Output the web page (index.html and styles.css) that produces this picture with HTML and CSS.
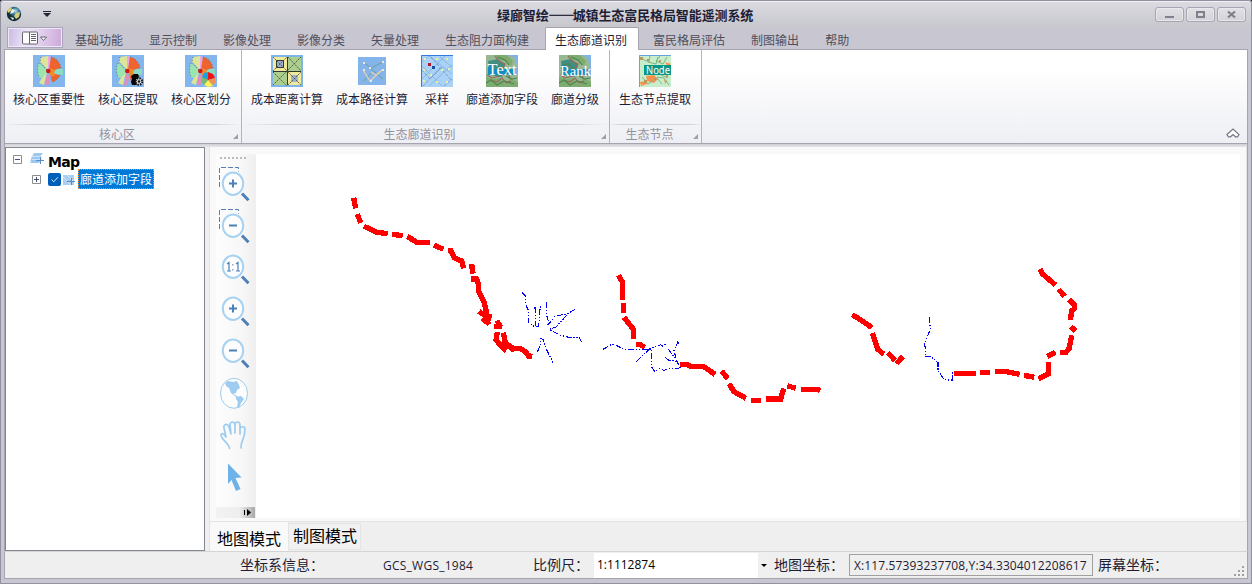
FILE: index.html
```html
<!DOCTYPE html>
<html lang="zh-CN">
<head>
<meta charset="utf-8">
<title>绿廊智绘——城镇生态富民格局智能遥测系统</title>
<link rel="stylesheet" href="styles.css">
</head>
<body>
<svg class="defs" width="0" height="0" aria-hidden="true">
  <defs>
    <radialGradient id="earth" cx=".6" cy=".3"><stop offset="0" stop-color="#b7dceb"/><stop offset=".5" stop-color="#367797"/><stop offset="1" stop-color="#122b35"/></radialGradient>
    <symbol id="core" viewBox="0 0 32 32">
      <path fill="#83b6ed" d="M0 0h32v32H0z"/>
      <path fill="#99e5ae" d="M6 8c-2 4-2 9 0 14l3 1 6-7z"/>
      <path fill="#dde598" d="M8 2l7-1v14l-8-8zM14 17l-5 6-3 5 5 2z"/>
      <path fill="#eda6e4" d="M15 1h2.500l-1 14H15z"/>
      <path fill="#ef642e" d="M18 2c5 1 9 5 10 11l-7 2-5-1zM17 18l10 2c-1 3-4 6-8 7z"/>
      <path fill="#f18c2b" d="M16 13l6 2v5l-3 2-3-4z"/>
      <path fill="#8bdcc0" d="M21 17l3-3h6v6l-8-1z"/>
      <path fill="#e58bbb" d="M14 19l3 2-1 8-4 2z"/>
      <path fill="none" stroke="#4f6b66" stroke-width=".8" stroke-dasharray="1 2" d="M8 2l-1 5 7 8M6 8c-2 4-2 9 0 14M18 2c5 1 9 5 10 11M27 20c-1 3-4 6-8 7"/>
      <circle cx="15.300" cy="16" r="2.300" fill="#d21818"/>
    </symbol>
    <symbol id="terrain" viewBox="0 0 32 32">
      <path fill="#80b3ea" d="M0 0h32v32H0z"/>
      <path fill="#98b894" d="M0 0h20l8 2 3 8-2 7 3 6v9H0z"/>
      <path fill="#418f82" d="M2 6l10-2 7 6-3 12-12-2z"/>
      <path fill="#7dac70" d="M0 22l7 2 7-1 6 7 4-7 8 4v5H0zM8 0h13l6 6-2 5-7-5-5-1z"/>
      <path fill="none" stroke="#9a6559" stroke-width="1.100" d="M9 1l4 5 6 3-3 5 6 4 2 5M4 25l7 2 5-4 4 5 5-2M1 20l5 3 8-2"/>
      <path fill="none" stroke="#528350" stroke-width="1.200" d="M12 2l7 3 4 5M3 10l7-1 4 5-5 4M0 28l5-3 6 5 7-4 10 3M20 21l6 3 5-1"/>
      <path fill="#168dbe" d="M2 10h5v10H2zM8 14h21v6H8z"/>
    </symbol>
    <symbol id="lens" viewBox="0 0 40 42">
      <ellipse cx="17" cy="20.700" rx="10.200" ry="11.200" fill="#fdfdfd" stroke="#a7d2f2" stroke-width="2"/>
      <path stroke="#4c80b7" stroke-width="3" d="M26 30.500l6.500 6.800"/>
    </symbol>
    <symbol id="marquee" viewBox="0 0 40 42"><path fill="none" stroke="#537fb4" stroke-dasharray="5 2" d="M3.500 24V4.500h19v4"/></symbol>
  </defs>
</svg>
<div class="window">
  <header class="titlebar">
    <svg class="globe" width="16" height="16" viewBox="0 0 16 16"><circle cx="8" cy="8" r="7.200" fill="url(#earth)"/><path fill="#d6ce78" d="M2 3l4-2-1 4-3 2zM10 7l4-1-1 5-3 2-2-3z"/><path fill="#eef3ec" d="M6 3l3 1-2 3-3 1zM4 11l4 1-1 2z"/></svg>
    <svg class="quick" width="8" height="6" viewBox="0 0 8 6"><path fill="#252434" d="M0 0h8v1H0zM0 2h8L4 6z"/></svg>
    <h1 class="title">绿廊智绘<span class="dash">——</span>城镇生态富民格局智能遥测系统</h1>
    <div class="controls">
      <span class="control"><svg width="27" height="13"><path fill="#807f8d" d="M9 8h9v2H9z"/></svg></span>
      <span class="control"><svg width="27" height="13"><path fill="none" stroke="#807f8d" stroke-width="2" d="M10 4h7v5h-7z"/></svg></span>
      <span class="control"><svg width="27" height="13"><path fill="none" stroke="#807f8d" stroke-width="2.300" d="M10 3.500l7 6M17 3.500l-7 6"/></svg></span>
    </div>
  </header>
  <nav class="tabs">
    <div class="app-button"><svg width="26" height="14" viewBox="0 0 26 14"><rect x=".5" y="1" width="15" height="12" rx="1" fill="#fff" stroke="#64636f"/><path stroke="#64636f" d="M7.500 1v12M9 3.500h5M9 5.500h5M9 7.500h5M9 9.500h5"/><path fill="#fff" stroke="#64636f" d="M18.500 6h6l-3 3.500z"/></svg></div>
    <span class="tab">基础功能</span><span class="tab">显示控制</span><span class="tab">影像处理</span><span class="tab">影像分类</span><span class="tab">矢量处理</span><span class="tab">生态阻力面构建</span><span class="tab tab-active">生态廊道识别</span><span class="tab">富民格局评估</span><span class="tab">制图输出</span><span class="tab">帮助</span>
  </nav>
  <section class="ribbon">
    <div class="group group-core">
      <div class="commands">
        <div class="command"><svg width="32" height="32"><use href="#core" width="32" height="32"/></svg><span>核心区重要性</span></div>
        <div class="command"><svg width="32" height="32" viewBox="0 0 32 32"><use href="#core" width="32" height="32"/><path fill="#050505" d="M19 21l3-2h4l1 3-2 3 1 4-2 1h-4l-1-3 1-3z"/><circle cx="27" cy="26.500" r="3.200" fill="#e7edf2" stroke="#111" stroke-width="2" stroke-dasharray="1.500 1"/><circle cx="27" cy="26.500" r="1.300" fill="#111"/></svg><span>核心区提取</span></div>
        <div class="command"><svg width="32" height="32" viewBox="0 0 32 32"><use href="#core" width="32" height="32"/><path fill="#13a3df" d="M23 25l-6-3 2-4 4-1z"/><path fill="#f01015" d="M23 25v-8l5 2 2 4z"/><path fill="#f39154" d="M23 25l7-2v5l-3 2z"/><path fill="#fff252" d="M23 25l5 6-5 1-4-2z"/><path fill="#75bb72" d="M23 25l-4 5-3-4 1-4z"/></svg><span>核心区划分</span></div>
      </div>
      <div class="caption">核心区<i class="launcher"></i></div>
    </div>
    <div class="group group-corridor">
      <div class="commands">
        <div class="command"><svg width="32" height="32" viewBox="0 0 32 32"><path fill="#7eb4e6" d="M0 0h32v32H0z"/><path fill="#f0e99b" d="M2 2h14v14H2zM17 17h13v13H17z"/><path fill="#adcf8d" d="M17 2h13v14H17zM2 17h14v13H2z"/><path fill="#9fb2d0" d="M5 5h7v8H5zM20 20h7v7h-7z"/><path fill="none" stroke="#30372f" d="M2 16.500h28M16.500 2v28M5.500 5.500h7v7h-7z"/><path fill="none" stroke="#454c3f" stroke-width=".8" stroke-dasharray="2 .7" d="M2 2l28 28M30 2L2 30M2 16L16 2M17 2l13 14M2 17l14 14M17 30l13-13"/></svg><span>成本距离计算</span></div>
        <div class="command"><svg width="32" height="32" viewBox="0 0 32 32"><path fill="#84b5ea" d="M2 2h28v28H2z"/><g fill="none"><path stroke="#6d9d9c" d="M8 8l7 5 12-6M14 13l13 11M8 26l7-8"/><path stroke="#e6ceb2" stroke-width="1.300" d="M7 15l7 11 12-11-6 5-5-3"/></g><path fill="#eee7d3" d="M7 7h2v2H7zM26 6h2v2h-2zM7 14h2v2H7zM26 14h2v2h-2zM14 25h2v2h-2zM13 12h2v2h-2z"/></svg><span>成本路径计算</span></div>
        <div class="command"><svg width="32" height="32" viewBox="0 0 32 32"><path fill="#a9d2f6" d="M0 0h32v32H0z"/><path fill="none" stroke="#89b7e1" d="M0 8l8-7 23 18M0 25L24 1M1 11l20 20M8 31L31 10M19 2l12 10"/><path fill="none" stroke="#678fbd" stroke-width=".8" stroke-dasharray="3 1.500" d="M1 15l8 9 12-12M10 2l21 24M23 31l8-7M2 31l17-18"/><path fill="#edf29d" d="M3 3h2v2H3zM15 3h2v2h-2zM25 3h2v2h-2zM2 14h2v2H2zM20 14h2v2h-2zM27 13h2v2h-2zM9 19h2v2H9zM2 25h2v2H2zM15 26h2v2h-2zM25 26h2v2h-2z"/><path fill="#bb1630" d="M7 8h3v3H7z"/><path fill="#15529b" d="M11 11h3v3h-3z"/><path fill="none" stroke="#347be1" d="M.5 32V.5H32"/></svg><span>采样</span></div>
        <div class="command"><svg width="32" height="32" viewBox="0 0 32 32"><use href="#terrain" width="32" height="32"/><text class="serif-mark" x="1.500" y="20" textLength="29" lengthAdjust="spacingAndGlyphs">Text</text></svg><span>廊道添加字段</span></div>
        <div class="command"><svg width="32" height="32" viewBox="0 0 32 32"><use href="#terrain" width="32" height="32"/><text class="serif-mark rank-mark" x="1" y="21" textLength="31" lengthAdjust="spacingAndGlyphs">Rank</text></svg><span>廊道分级</span></div>
      </div>
      <div class="caption">生态廊道识别<i class="launcher"></i></div>
    </div>
    <div class="group group-node">
      <div class="commands">
        <div class="command"><svg width="32" height="32" viewBox="0 0 32 32"><path fill="#c7edca" d="M0 0h32v32H0z"/><path fill="#fb914b" d="M26 7l6 2-3 3zM7 21l8-1 4 4-4 4-7-2zM1 27l6-1 1 3-6 2zM25 24l3 2-2 3z"/><path fill="none" stroke="#7fb48a" d="M3 4l7 3 1-6M9 7l8 2 2-7M21 1l-4 5 7 3 4-7M3 22l6 7 9-6 5 6M18 22l7 1 5 7M22 20l7 3"/><path fill="#ba9a63" d="M1 2h3v3H1zM8 4h2v2H8zM20 5h2v2h-2zM5 25h3v3H5zM15 23h2v2h-2zM27 20h2v2h-2z"/><path fill="#0a9783" d="M5 10h27v10H5z"/><text class="node-mark" x="7" y="18.700" textLength="24" lengthAdjust="spacingAndGlyphs">Node</text><path fill="none" stroke="#69a3dc" d="M.5 32V.5H32"/></svg><span>生态节点提取</span></div>
      </div>
      <div class="caption">生态节点<i class="launcher"></i></div>
    </div>
    <div class="ribbon-rest"><svg width="14" height="10" viewBox="0 0 14 10"><path fill="#fff" stroke="#777583" stroke-width="1.200" d="M1 6.500l6-5.500 6 5.500-1.500 2.300h-2L7 6.500 4.500 8.800h-2z"/></svg></div>
  </section>
  <main class="work">
    <aside class="tree">
      <div class="tree-row tree-root"><svg width="9" height="9"><path fill="#fff" stroke="#8d8d8d" d="M.5.5h8v8h-8z"/><path stroke="#424e75" d="M2 4.500h5"/></svg><svg class="layers" width="14" height="12" viewBox="0 0 14 12"><path fill="#9cc8ee" d="M4 0h9L9 5H1zM3 3h9L9 8H0zM3 6h9L9 10H0z"/><path stroke="#e5f1fb" stroke-width=".7" d="M2 3.500h10M2 6.500h9"/><path stroke="#5b8cc4" d="M6 7.500h8M10.500 4v7"/></svg><strong>Map</strong></div>
      <div class="tree-row tree-child"><svg width="9" height="9"><path fill="#fff" stroke="#8d8d8d" d="M.5.5h8v8h-8z"/><path stroke="#424e75" d="M2 4.500h5M4.500 2v5"/></svg><svg class="check" width="13" height="13"><rect width="13" height="13" rx="2" fill="#005fb8"/><path fill="none" stroke="#d8eafc" d="M3.500 6.500l2.300 2.300 4-4.500"/></svg><svg class="layer" width="13" height="12"><path fill="#aacff1" d="M1 1h11v10H1z"/><path stroke="#d1e5f7" d="M1 3l8 8M5 1l7 7"/><path stroke="#568ac2" d="M5 7.500h8M9.500 4v7"/></svg><span class="selected">廊道添加字段</span></div>
    </aside>
    <section class="workspace">
      <div class="page">
        <div class="toolbar">
          <div class="grip"></div>
          <svg class="tool" viewBox="0 0 40 42"><use href="#marquee"/><use href="#lens"/><path stroke="#4c80b7" stroke-width="2" d="M13 20.500h8M17 16.500v8"/></svg>
          <svg class="tool tool-short" viewBox="0 0 40 41"><use href="#marquee" width="40" height="42"/><use href="#lens" width="40" height="42"/><path stroke="#4c80b7" stroke-width="2" d="M13 20.500h8"/></svg>
          <svg class="tool" viewBox="0 0 40 42"><use href="#lens"/><path stroke="#4c80b7" fill="none" stroke-width="1.200" d="M11 18l2-1.500V25M11 25h4M20 18l2-1.500V25M20 25h4"/><path fill="#87aed0" d="M16 18h1.500v1.500H16zM16 23h1.500v1.500H16z"/></svg>
          <svg class="tool" viewBox="0 0 40 42"><use href="#lens"/><path stroke="#4c80b7" stroke-width="2" d="M13 20.500h8M17 16.500v8"/></svg>
          <svg class="tool" viewBox="0 0 40 42"><use href="#lens"/><path stroke="#4c80b7" stroke-width="2" d="M13 20.500h8"/></svg>
          <svg class="tool" viewBox="0 0 40 42"><ellipse cx="18" cy="21.300" rx="13.500" ry="15" fill="#fdfdfd" stroke="#9dccf0"/><path fill="#9dccf0" d="M9 11l3-2 5 1 4-1 2 4 1 3-3 2-1 3-3 1 4 2 2 2-3-1-5-4-2-5-3-2zM20 25l5-1 3 3-3 4-2 5-2-1 1-5-2-3z"/></svg>
          <svg class="tool" viewBox="0 0 40 42"><path fill="none" stroke="#9dccf0" stroke-width="1.700" stroke-linecap="round" stroke-linejoin="round" d="M13.500 34.500c0-5-8.500-9-8.500-13.500 0-2 3-2 5 2L8 14c-1-4 3.500-5 5-1l2 7-1-9c0-4 4.500-4 5 0v8-8c0-4 5-4 5 0v9-5c0-3 5-3 5 0 0 12-5 12-4 19"/></svg>
          <svg class="tool" viewBox="0 0 40 42"><path fill="#6db2e8" d="M12 7.500l13.500 14-6 .5 5 11-4.500 2-4.500-11L12 28z"/></svg>
          <div class="overflow"><svg width="7" height="7"><path stroke="#000" d="M.5 1v5"/><path d="M3 0l4 3.500L3 7z"/></svg></div>
        </div>
        <svg class="map" viewBox="256 154 984 364">
          <g class="corridor">
            <g transform="translate(340 180) scale(.333333)">
              <path d="M41 53l6 32M52 102l10 27M72 139l39 18 32 4M156 163l32 4M202 169l28 18h40M282 195l28 13M324 211h8l12 23 21 9 6 22M388 259h8l3 22M394 297h15l7 15v21l16 33 8 33v16l5 18M417 394l20 14 18 3M427 414l20 18M431 397l15 30M462 439h24M471 422l11 20M472 456l-4 24 18 20 13 12M490 458l6 32 17 12 9 12M498 491l24 15h20l16 11 12 18M570 520l-2 16"/>
            </g>
            <g transform="translate(590 260) scale(.333333)">
              <path d="M85 46l12 19v55M100 128v31M102 172l29 37v27M138 253h10l17 9M270 313h19l17 7h35l34 23M395 333l18 23M417 371l15 24 36 20M483 421h30M528 417h44l9-32M592 377l25 8M633 388h50l8 4"/>
            </g>
            <g transform="translate(840 250) scale(.333333)">
              <path d="M37 194l35 22 23 17M97 249l16 48 18 16M143 308l22 23M170 341l19-22M342 370h66M420 367h30M465 364h30l44 9M552 376l31 6M596 387l29-16v-35M622 320l24-14M660 307h18l10-13 7-38M692 230l15 13M691 210l4-27 8-7V164l-15-15M674 139l-18-21M646 105l-38-33-8-15"/>
            </g>
          </g>
          <g class="stream">
            <g transform="translate(340 180) scale(.333333)">
              <path d="M546 337l11 12v24l9 20v35l16 11h14l5-64M585 381l2 57M620 366v39l8 30M622 436l25-28 33-6 24-13M680 406l-32 35-20 7 31 17 27 7h31l8 14M592 516l9-21v-20l9 4 6 23 23 46"/>
            </g>
            <g transform="translate(590 260) scale(.333333)">
              <path d="M39 268l25-14h12l24 14h19l65-1v53l10 14 15-8 12 5 25-6h20l10-6M139 305l38-37 35-14 5 4 13-8M226 293l10 7 20 4 12 10M235 266l9 15 14 15 6 16M268 253l-5-6-11 25 6 24"/>
            </g>
            <g transform="translate(840 250) scale(.333333)">
              <path d="M268 202l3 37-13 29-4 14 4 26-4 12 16-2 24 20v24l16 24 12 4h15v-23"/>
            </g>
          </g>
        </svg>
      </div>
      <div class="views"><span class="view view-active">地图模式</span><span class="view view-other">制图模式</span></div>
    </section>
  </main>
  <footer class="status">
    <span class="st-crs">坐标系信息：</span>
    <span class="st-name">GCS_WGS_1984</span>
    <span class="st-scale">比例尺：</span>
    <span class="combo"><span>1:1112874</span><i class="combo-arrow"></i></span>
    <span class="st-map">地图坐标：</span>
    <span class="coords"><span>X:117.57393237708,Y:34.3304012208617</span></span>
    <span class="st-screen">屏幕坐标：</span>
    <svg class="resize" width="11" height="11"><path fill="#a0a0a0" d="M8 0h2v2H8zM4 4h2v2H4zM8 4h2v2H8zM0 8h2v2H0zM4 8h2v2H4zM8 8h2v2H8z"/></svg>
  </footer>
</div>
</body>
</html>
```
FILE: styles.css
```css
* { box-sizing: border-box; }
body { margin: 0; background: #17171c; font: 12px/16px "Noto Sans", "Noto Sans CJK SC", sans-serif; color: #1e1d35; }
svg { display: block; flex: none; }
.defs { height: 0; }
.window { width: 1252px; height: 584px; overflow: hidden; display: flex; flex-direction: column; padding: 0 4px 5px; border-radius: 4px 4px 0 0; background: linear-gradient(#dcdce2, #c7c7ce 27px, #c8c7d1 28px); box-shadow: inset 0 0 0 1px #92919f, inset 0 2px #f0f0f4; }
.titlebar { height: 27px; display: flex; align-items: center; padding: 1px 2px 0 2px; }
.quick { margin-left: 21px; }
.title { margin: 1px 0 0 446px; width: 260px; font: bold 13px/20px "Noto Sans CJK SC", sans-serif; letter-spacing: -.1px; white-space: nowrap; }
.dash { letter-spacing: -2px; -webkit-text-stroke: .5px #1e1d35; }
.controls { display: flex; gap: 2px; margin-left: auto; }
.control { width: 29px; height: 15px; border: 1px solid #a6a5b1; border-radius: 3px; background: linear-gradient(#e2e2e6, #d1d1d7); box-shadow: inset 0 0 0 1px #e9e9ed; }
.tabs { height: 22px; display: flex; padding-left: 3px; }
.app-button { width: 56px; height: 21px; display: flex; align-items: center; justify-content: center; border: 1px solid #aaa5bb; background: linear-gradient(100deg, #c9b9e3, #ede6f8 35%, #d9c0e5 75%, #cba7da); box-shadow: inset 0 0 0 1px #eee8f6; }
.tab { height: 23px; padding: 6px 13px 0; color: #4f4e5c; white-space: nowrap; }
.app-button + .tab { margin-left: -1px; }
.tab-active { width: 94px; position: relative; margin: 0 1px 0 3px; padding: 5px 0 0 9px; border: 1px solid #a5a4b0; border-bottom: 0; border-radius: 2px 2px 0 0; background: #fff; color: #1e1d35; }
.ribbon { height: 95px; flex: none; display: flex; border: 1px solid #a5a4b0; background: linear-gradient(#fff 20%, #eeeff4); }
.group { display: flex; flex-direction: column; border-right: 1px solid #b4b4bd; }
.group-core { width: 237px; }
.group-corridor { width: 368px; }
.group-node { width: 92px; }
.commands { height: 74px; flex: none; display: flex; gap: 13px; padding: 5px 0 0 9px; }
.group-core .commands { padding-left: 8px; }
.command { min-width: 32px; display: flex; flex-direction: column; align-items: center; gap: 5px; white-space: nowrap; }
.caption { height: 19px; line-height: 16px; text-align: center; position: relative; border-top: 1px solid; border-image: linear-gradient(90deg, transparent, #d2d2d9 12%, #d2d2d9 88%, transparent) 1; padding: 2px 12px 0 0; color: #92929f; }
.launcher { position: absolute; right: 3px; bottom: 4px; border-left: 5px solid transparent; border-bottom: 5px solid #9f9faa; }
.ribbon-rest { flex: 1; display: flex; justify-content: flex-end; align-items: flex-end; padding: 0 7px 5px; }
.serif-mark { font: 16px "Liberation Serif", serif; fill: #fff; }
.rank-mark { font-size: 15px; }
.node-mark { font: 10px "Noto Sans", sans-serif; fill: #fff; }
.work { height: 407px; flex: none; display: flex; gap: 4px; padding-top: 3px; border: solid #a5a4b0; border-width: 0 1px; background: linear-gradient(#cfcfd6 0, #e5e5e9 3px, #efefef 3px); }
.tree { width: 200px; height: 404px; border: 1px solid #828790; background: #fff; padding-top: 2px; }
.tree-row { display: flex; align-items: center; }
.tree-root { height: 19px; padding-left: 7px; }
.tree-root > svg { margin-top: -1px; }
.tree-root strong { margin: 4px 0 0 4px; color: #000; font: bold 14px/18px "DejaVu Sans", sans-serif; letter-spacing: -.7px; }
.tree-root .layers { margin-left: 8px; }
.tree-child { height: 20px; padding-left: 26px; }
.check { margin-left: 7px; }
.layer { margin: 1px 0 0 1px; }
.selected { width: 76px; height: 20px; margin-left: 3px; padding-left: 1px; border: 1px dotted #ff8b2b; background: #0078d7; color: #fff; line-height: 20px; }
.workspace { flex: 1; display: flex; flex-direction: column; }
.page { height: 375px; display: flex; border: 1px solid #e3e3e3; border-top: 0; background: #f9f9f9; padding: 7px 6px 3px; }
.toolbar { width: 40px; height: 364px; display: flex; flex-direction: column; border-radius: 3px 3px 0 0; background: linear-gradient(90deg, #fdfdfd, #f7f7f7 65%, #efefef); }
.grip { height: 2px; margin: 3px 10px 4px 4px; background: repeating-linear-gradient(90deg, #bcbcbc 0 2px, transparent 2px 4px); }
.tool { width: 40px; height: 42px; }
.tool-short { height: 41px; }
.overflow { height: 11px; display: flex; align-items: center; justify-content: flex-end; margin: 9px 1px 0 0; padding-right: 4px; background: linear-gradient(90deg, #f2f2f2, #eee 60%, #aaa); }
.map { width: 984px; height: 364px; background: #fff; shape-rendering: crispEdges; }
.corridor { fill: none; stroke: #f00; stroke-width: 16; }
.stream { fill: none; stroke: #00f; stroke-width: 3.3; stroke-dasharray: 18 5 4 5 4 5; }
.views { height: 29px; display: flex; font-size: 16px; line-height: 24px; color: #000; }
.view { white-space: nowrap; }
.view-active { width: 79px; padding: 5px 0 0 7px; border-left: 1px solid #e3e3e3; background: #f9f9f9; }
.view-other { width: 73px; height: 27px; margin-top: 1px; padding: 0 0 0 4px; border: 1px solid #e4e4e4; background: #f1f1f1; }
.status { height: 28px; flex: none; display: flex; align-items: center; border: solid #a5a4b0; border-width: 0 1px 1px; border-top: 1px solid #d4d4d4; padding-left: 235px; background: #efefef; font-size: 14px; white-space: nowrap; }
.st-crs { width: 143px; }
.st-name { width: 150px; padding-top: 1px; font: 12px/16px "Open Sans", sans-serif; letter-spacing: .25px; }
.st-scale { width: 61px; }
.combo { width: 175px; height: 25px; display: flex; background: #fff; color: #000; font: 12px/24px "Open Sans", sans-serif; padding-left: 3px; }
.combo-arrow { width: 11px; margin-left: auto; background: #f0f0f0; display: flex; align-items: center; justify-content: center; }
.combo-arrow::after { content: ""; border: 3px solid transparent; border-top-color: #000; border-bottom: 0; }
.st-map { width: 75px; margin-left: 5px; }
.coords { width: 244px; height: 22px; border: 1px solid #a0a0a0; padding-left: 4px; font: 12px/21px "Open Sans", sans-serif; letter-spacing: .12px; }
.st-screen { margin-left: 5px; }
.resize { margin: 12px 2px 0 auto; }
```
